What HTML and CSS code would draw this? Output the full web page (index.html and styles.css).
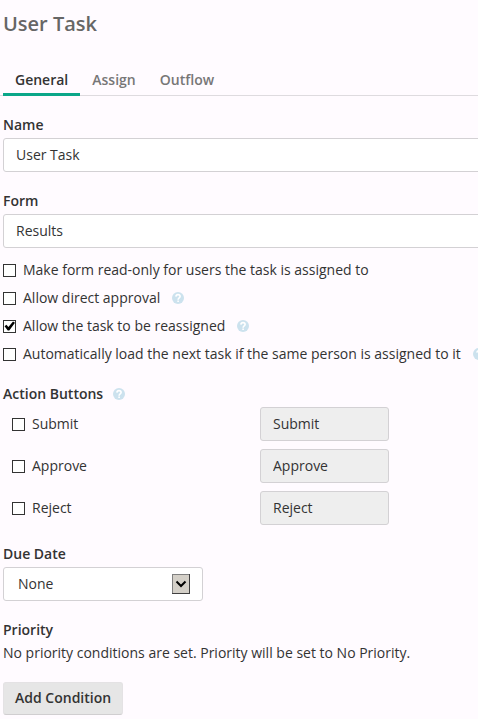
FILE: index.html
```html
<!DOCTYPE html>
<html lang="en">
<head>
    <meta charset="UTF-8">
    <meta name="viewport" content="width=device-width, initial-scale=1.0">
    <title>User Task</title>
    <link rel="stylesheet" href="styles.css">
</head>
<body>
    <!-- Shared help icon -->
    <svg class="sprite" aria-hidden="true">
        <symbol id="help" viewBox="0 0 12 12">
            <circle cx="6" cy="6" r="6" fill="#cce2ee"/>
            <path d="M3.9 4.6C4 3.3 4.9 2.6 6 2.6s2.1.7 2.1 1.9c0 1.4-2 1.4-2 3.2" fill="none" stroke="#fff" stroke-width="1.6"/>
            <rect x="5.3" y="8.5" width="1.6" height="1.5" fill="#fff"/>
        </symbol>
    </svg>

    <main class="panel">
        <h1>User Task</h1>

        <nav class="tabs">
            <a href="#general" class="tab active">General</a>
            <a href="#assign" class="tab">Assign</a>
            <a href="#outflow" class="tab">Outflow</a>
        </nav>

        <form id="general">
            <div class="form-group">
                <label class="title" for="name">Name</label>
                <input type="text" class="field" id="name" value="User Task">
            </div>

            <div class="form-group">
                <label class="title" for="form">Form</label>
                <input type="text" class="field" id="form" value="Results">
            </div>

            <div class="options">
                <div class="option">
                    <input type="checkbox" id="readonly">
                    <label for="readonly">Make form read-only for users the task is assigned to</label>
                </div>
                <div class="option">
                    <input type="checkbox" id="direct">
                    <label for="direct">Allow direct approval</label>
                    <svg class="help"><use href="#help"/></svg>
                </div>
                <div class="option">
                    <input type="checkbox" id="reassign" checked>
                    <label for="reassign">Allow the task to be reassigned</label>
                    <svg class="help"><use href="#help"/></svg>
                </div>
                <div class="option">
                    <input type="checkbox" id="autoload">
                    <label for="autoload">Automatically load the next task if the same person is assigned to it</label>
                    <svg class="help"><use href="#help"/></svg>
                </div>
            </div>

            <div class="form-group">
                <h2 class="title">Action Buttons <svg class="help"><use href="#help"/></svg></h2>
                <div class="actions">
                    <div class="action">
                        <div class="option">
                            <input type="checkbox" id="submit">
                            <label for="submit">Submit</label>
                        </div>
                        <input type="text" class="field" value="Submit" aria-label="Submit button text" disabled>
                    </div>
                    <div class="action">
                        <div class="option">
                            <input type="checkbox" id="approve">
                            <label for="approve">Approve</label>
                        </div>
                        <input type="text" class="field" value="Approve" aria-label="Approve button text" disabled>
                    </div>
                    <div class="action">
                        <div class="option">
                            <input type="checkbox" id="reject">
                            <label for="reject">Reject</label>
                        </div>
                        <input type="text" class="field" value="Reject" aria-label="Reject button text" disabled>
                    </div>
                </div>
            </div>

            <div class="form-group">
                <label class="title" for="due">Due Date</label>
                <div class="select">
                    <select class="field" id="due">
                        <option>None</option>
                    </select>
                    <svg class="arrow" viewBox="0 0 18 20">
                        <rect width="18" height="20" fill="#404040"/>
                        <path d="M0 0h18l-1 1v18H1l-1 1z" fill="#808080"/>
                        <rect x="1" y="1" width="16" height="18" fill="#d4d0c8"/>
                        <path d="M17 0h1v20H0v-1h17z" fill="#404040"/>
                        <path d="M4.5 7.5l4.5 4.5 4.5-4.5" fill="none" stroke="#000" stroke-width="2"/>
                    </svg>
                </div>
            </div>

            <div class="form-group">
                <h2 class="title">Priority</h2>
                <p>No priority conditions are set. Priority will be set to No Priority.</p>
            </div>

            <button type="button">Add Condition</button>
        </form>
    </main>
</body>
</html>
```
FILE: styles.css
```css
* {
    margin: 0;
    padding: 0;
    box-sizing: border-box;
}

body {
    font-family: 'Open Sans', 'Noto Sans', sans-serif;
    font-size: 14px;
    line-height: 20px;
    color: #333;
    background: #fffbff;
    overflow-x: hidden;
}

.sprite {
    display: none;
}

/* The panel runs on past the right edge of the window */
.panel {
    margin-right: -20px;
    padding: 10px 0 4px 3px;
}

h1 {
    font-size: 20px;
    font-weight: 600;
    line-height: 28px;
    color: #666;
}

.tabs {
    display: flex;
    margin: 32px 0 19px -3px;
    padding-left: 3px;
    box-shadow: inset 0 -1px #dedbdf;
}

.tab {
    padding: 0 12px 3px;
    border-bottom: 3px solid transparent;
    font-weight: 600;
    color: #777;
    text-decoration: none;
}

.tab.active {
    color: #333;
    border-color: #0aa789;
}

.form-group {
    margin-bottom: 19px;
}

.title {
    display: flex;
    align-items: center;
    margin-bottom: 3px;
    font-size: 14px;
    font-weight: 600;
}

.field {
    display: block;
    width: 100%;
    height: 34px;
    padding: 0 12px 2px;
    border: 1px solid #d3d1d4;
    border-radius: 3px;
    background: #fff;
    font: inherit;
    color: #333;
}

.field:disabled {
    background: #eee;
}

.options {
    margin: -11px 0 16px;
}

.option {
    display: flex;
    align-items: center;
    height: 28px;
    white-space: nowrap;
}

input[type="checkbox"] {
    appearance: none;
    flex: none;
    width: 13px;
    height: 13px;
    margin-right: 7px;
    border: 1px solid #333;
    background: #fff;
}

input[type="checkbox"]:checked::before {
    content: '';
    display: block;
    width: 11px;
    height: 11px;
    background: #000;
    clip-path: polygon(5% 52%, 22% 38%, 40% 60%, 82% 8%, 100% 20%, 48% 92%, 34% 92%);
}

.help {
    flex: none;
    width: 12px;
    height: 12px;
    margin-left: 12px;
}

.title .help {
    margin-left: 10px;
}

.actions {
    display: grid;
    gap: 8px;
}

.action {
    display: grid;
    grid-template-columns: 248px 129px;
    align-items: center;
    padding-left: 9px;
}

.select {
    position: relative;
    width: 200px;
}

.select .field {
    appearance: none;
    padding: 0 14px;
}

.arrow {
    position: absolute;
    top: 7px;
    right: 13px;
    width: 18px;
    height: 20px;
    pointer-events: none;
}

button {
    height: 33px;
    padding: 0 11px 2px;
    border: 1px solid #e4e2e4;
    border-bottom-color: #d0ced0;
    border-radius: 3px;
    background: #e6e6e6;
    font: inherit;
    font-weight: 600;
    color: #333;
    cursor: pointer;
}
```
